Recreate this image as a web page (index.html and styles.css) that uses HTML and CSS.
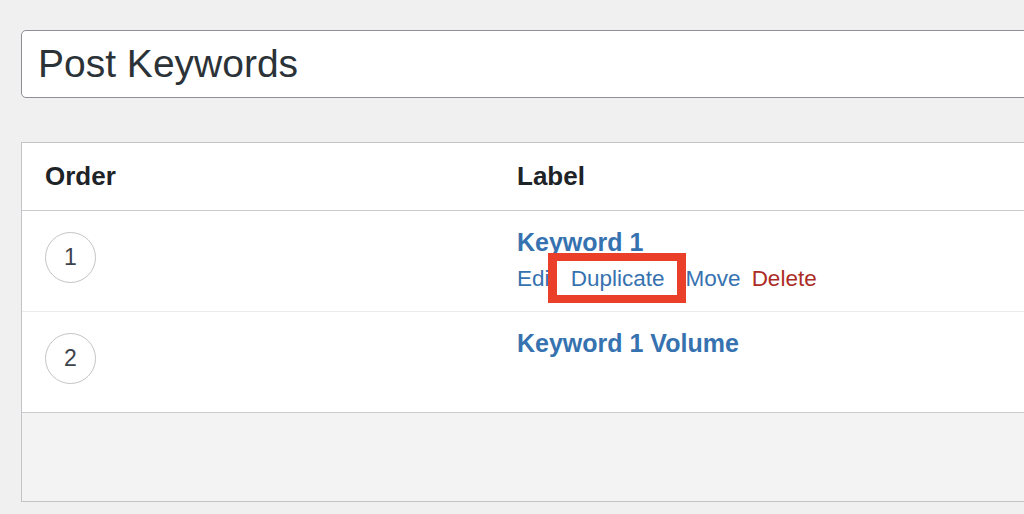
FILE: index.html
```html
<!DOCTYPE html>
<html lang="en">
<head>
  <meta charset="UTF-8" />
  <title>Post Keywords</title>
  <link rel="stylesheet" href="styles.css">
</head>
<body>

  <!-- title field -->
  <div class="title-field">Post Keywords</div>

  <!-- fields table -->
  <div class="fields">
    <div class="row head">
      <div class="cell">Order</div>
      <div class="cell">Label</div>
    </div>

    <div class="row">
      <div class="cell"><span class="order">1</span></div>
      <div class="cell">
        <a class="row-title">Keyword 1</a>
        <div class="actions">
          <a class="edit">Edit</a>
          <a class="marked">Duplicate</a>
          <a class="move">Move</a>
          <a class="delete">Delete</a>
        </div>
      </div>
    </div>

    <div class="row">
      <div class="cell"><span class="order">2</span></div>
      <div class="cell">
        <a class="row-title">Keyword 1 Volume</a>
      </div>
    </div>

    <div class="foot"></div>
  </div>

</body>
</html>
```

FILE: styles.css
```css
* {
  margin: 0;
  padding: 0;
  box-sizing: border-box;
}

body {
  background: #f0f0f0;
  font-family: "Liberation Sans", Arial, sans-serif;
  color: #1d2327;
  padding: 30px 0 0 21px;
  overflow: hidden;
  height: 514px;
}

.title-field {
  width: 1100px;
  height: 68px;
  background: #fff;
  border: 1px solid #8c8f94;
  border-radius: 5px;
  display: flex;
  align-items: center;
  padding-left: 16px;
  font-size: 39px;
  color: #2c3338;
}

.fields {
  width: 1100px;
  margin-top: 44px;
  border: 1px solid #c3c4c7;
  background: #fff;
}

.row {
  display: grid;
  grid-template-columns: 472px 1fr;
  height: 101px;
  border-bottom: 1px solid #ececed;
}

.row .cell {
  padding: 0 23px;
}

.row.head {
  height: 68px;
  align-items: center;
  border-bottom: 1px solid #c9cbcf;
  font-size: 26px;
  font-weight: bold;
}

.order {
  display: flex;
  align-items: center;
  justify-content: center;
  width: 51px;
  height: 51px;
  margin-top: 21px;
  border: 1.5px solid #c3c4c7;
  border-radius: 50%;
  font-size: 23px;
  color: #3c434a;
}

.row-title {
  display: block;
  margin-top: 16px;
  font-size: 25px;
  line-height: 30px;
  font-weight: bold;
  color: #3672b0;
}

.actions {
  display: flex;
  margin-top: 8px;
  font-size: 22.5px;
  line-height: 28px;
  color: #3672b0;
}

.actions .edit {
  margin-right: 15px;
}

.actions .marked {
  margin-right: 21px;
}

.actions .move {
  margin-right: 11px;
}

.actions .delete {
  color: #ac2b26;
}

/* red highlight round Duplicate */
.actions .marked {
  position: relative;
}

.actions .marked::after {
  content: "";
  box-sizing: border-box;
  position: absolute;
  left: -23px;
  top: -12px;
  width: 138px;
  height: 50px;
  border: 8px solid #ea4029;
  border-left-width: 9px;
  border-right-width: 9px;
}

.foot {
  height: 89px;
  background: #f3f3f4;
  border-top: 1px solid #c9cbcf;
  margin-top: -1px;
}
```
